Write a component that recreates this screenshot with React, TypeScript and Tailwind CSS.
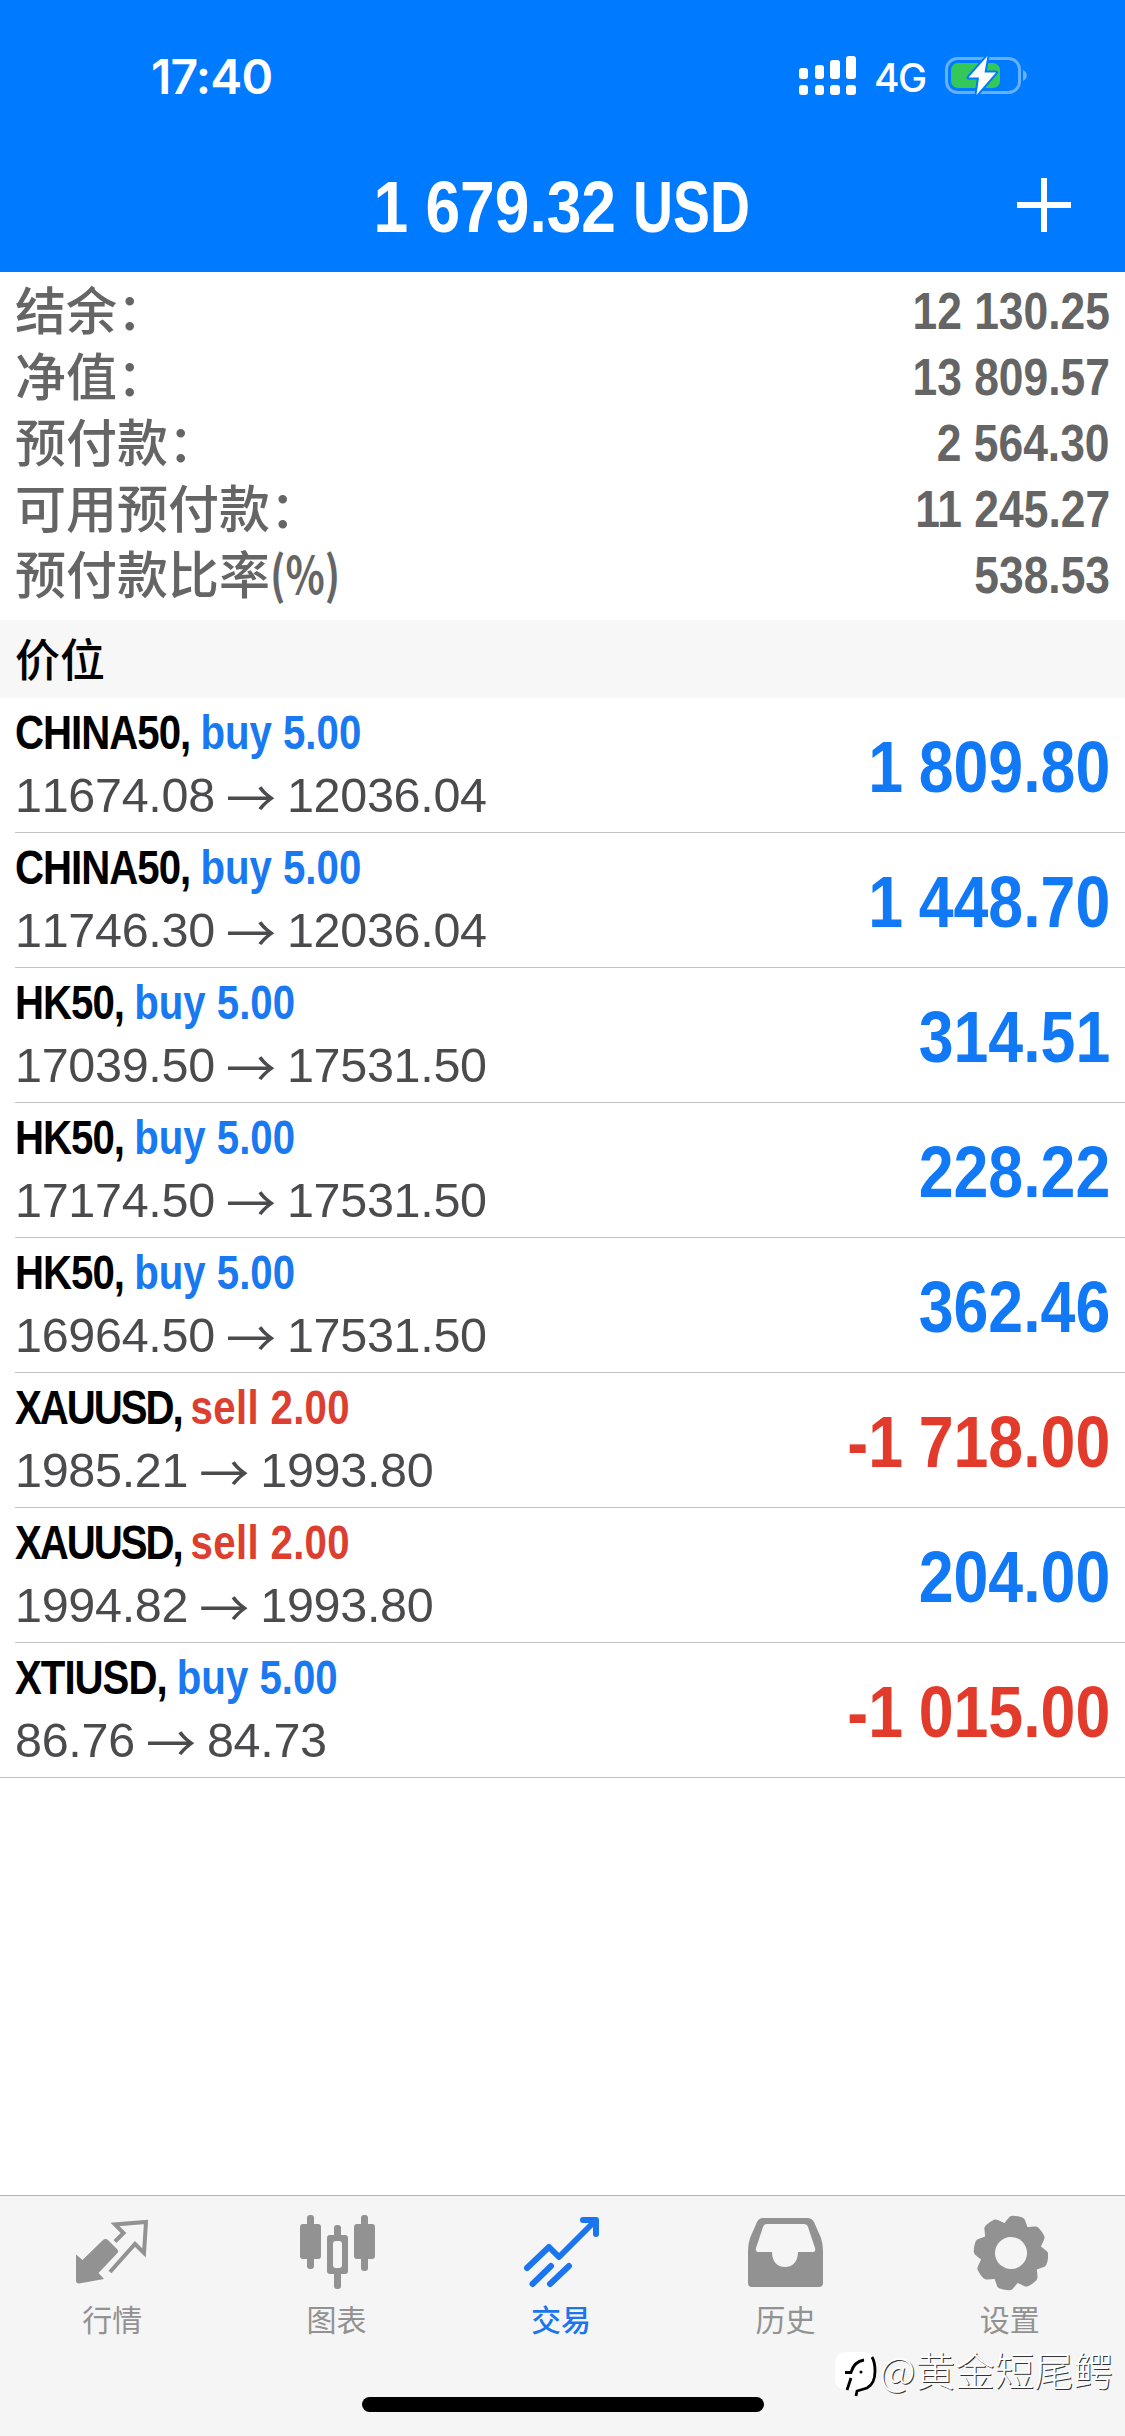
import React from 'react'

type Position = {
  symbol: string
  side: 'buy' | 'sell'
  volume: string
  open: string
  current: string
  profit: string
}

const summary = [
  { label: '结余：', value: '12 130.25' },
  { label: '净值：', value: '13 809.57' },
  { label: '预付款：', value: '2 564.30' },
  { label: '可用预付款：', value: '11 245.27' },
  { label: '预付款比率', unit: '(%)', value: '538.53' },
]

const positions: Position[] = [
  { symbol: 'CHINA50', side: 'buy', volume: '5.00', open: '11674.08', current: '12036.04', profit: '1 809.80' },
  { symbol: 'CHINA50', side: 'buy', volume: '5.00', open: '11746.30', current: '12036.04', profit: '1 448.70' },
  { symbol: 'HK50', side: 'buy', volume: '5.00', open: '17039.50', current: '17531.50', profit: '314.51' },
  { symbol: 'HK50', side: 'buy', volume: '5.00', open: '17174.50', current: '17531.50', profit: '228.22' },
  { symbol: 'HK50', side: 'buy', volume: '5.00', open: '16964.50', current: '17531.50', profit: '362.46' },
  { symbol: 'XAUUSD', side: 'sell', volume: '2.00', open: '1985.21', current: '1993.80', profit: '-1 718.00' },
  { symbol: 'XAUUSD', side: 'sell', volume: '2.00', open: '1994.82', current: '1993.80', profit: '204.00' },
  { symbol: 'XTIUSD', side: 'buy', volume: '5.00', open: '86.76', current: '84.73', profit: '-1 015.00' },
]

// condensed look: bold sans squeezed horizontally with scale-x
const condensed = "font-['Liberation_Sans',Arial,sans-serif] font-bold"
const cjk = "font-['Noto_Sans_CJK_SC',sans-serif]"

const StatusBar: React.FC = () => (
  <div className="flex h-[138px] items-start justify-between pl-[151px] pr-[96px] text-white">
    <span className="mt-[53px] font-['Inter',sans-serif] text-[48px] leading-[48px] font-semibold tracking-[-0.8px]">
      17:40
    </span>
    <div className="mt-[52px] flex">
      <svg className="mt-[3px]" width="58" height="42" viewBox="0 0 58 42" fill="#fff">
        <rect x="0" y="13" width="9" height="11" rx="3" />
        <rect x="16" y="10" width="9" height="14" rx="3" />
        <rect x="31" y="5" width="10" height="19" rx="3" />
        <rect x="47" y="1" width="10" height="23" rx="3" />
        <rect x="0" y="30" width="9" height="10" rx="3" />
        <rect x="16" y="30" width="9" height="10" rx="3" />
        <rect x="31" y="30" width="10" height="10" rx="3" />
        <rect x="47" y="30" width="10" height="10" rx="3" />
      </svg>
      <span className="mt-[4px] ml-[17px] w-[54px] font-['Inter',sans-serif] text-[39px] leading-[44px] font-medium tracking-[-1.5px]">
        4G
      </span>
      <svg className="ml-[17px]" width="84" height="44" viewBox="0 0 84 44">
        <rect x="1.5" y="6.5" width="73" height="34" rx="11" fill="none" stroke="#66b0ff" strokeWidth="3" />
        <path d="M78 18c5 2 5 9 0 11z" fill="#66b0ff" />
        <rect x="6" y="11" width="49" height="25" rx="7" fill="#34c759" />
        <path
          d="M42.500 4 23.500 25.500h10.500L31.500 43 51 20.500H39.500z"
          fill="#fff"
          stroke="#007aff"
          strokeWidth="4"
          strokeLinejoin="round"
          paintOrder="stroke"
        />
      </svg>
    </div>
  </div>
)

const QuotesIcon = () => (
  <svg width="76" height="76" viewBox="0 0 76 76">
    <path
      d="M2 39.500 8.500 45 28.500 25.500c2-2 4-2 5.500-.5l9 9c1.500 1.500 1.500 3 0 4.500L24.500 58l5.500 6L5 68.500q-3 0-3-3z"
      fill="#929292"
    />
    <path
      d="M41 26.500 49.500 18 41 9.500l31-2.500-2 31-9-9L36 57"
      fill="none"
      stroke="#929292"
      strokeWidth="4"
    />
  </svg>
)

const ChartIcon = () => (
  <svg width="76" height="76" viewBox="0 0 76 76" fill="#929292">
    <rect x="8" y="0" width="7" height="54" rx="3" />
    <rect x="1" y="9" width="21" height="35" rx="3" />
    <rect x="35" y="10" width="7" height="64" rx="3" />
    <rect x="28" y="20" width="21" height="39" rx="3" />
    <rect x="34" y="26" width="9" height="27" rx="3" fill="#f5f5f5" />
    <rect x="62" y="0" width="7" height="56" rx="3" />
    <rect x="55" y="9" width="21" height="35" rx="3" />
  </svg>
)

const TradeIcon = () => (
  <svg width="76" height="76" viewBox="0 0 76 76" fill="none" stroke="#1a75ee" strokeWidth="6" strokeLinecap="round" strokeLinejoin="round">
    <path d="M4 53 26 32l10 10L72 6" />
    <path d="M60 5h13v14" />
    <path d="M9.500 69 28 51M27 69l19-18" />
  </svg>
)

const HistoryIcon = () => (
  <svg width="76" height="76" viewBox="0 0 76 76">
    <path
      fillRule="evenodd"
      d="M16 3h44q5 0 7 4l7 16q2 6 2 13v32q0 4-4 4H5q-4 0-4-4V36q0-7 2-13L10 7q2-4 6-4zM20 9q-3 0-4 3L9 33q-1 4 3 4h13c0 9 5 15 13 15s13-6 13-15h15q3 0 2-4l-7-21q-1-3-4-3z"
      fill="#929292"
    />
  </svg>
)

const SettingsIcon = () => (
  <svg width="76" height="76" viewBox="-39 -38 76 76">
    <g fill="#929292" transform="rotate(10)">
      <circle r="30" />
      {[0, 45, 90, 135, 180, 225, 270, 315].map((angle) => (
        <path
          key={angle}
          transform={`rotate(${angle})`}
          d="M-12.500-27-8.500-34q1-2.500 3.500-3 5-.8 10 0 2.500.5 3.500 3L12.500-27z"
        />
      ))}
    </g>
    <circle r="16" fill="#f5f5f5" />
  </svg>
)

const tabs = [
  { label: '行情', icon: <QuotesIcon /> },
  { label: '图表', icon: <ChartIcon /> },
  { label: '交易', icon: <TradeIcon />, active: true },
  { label: '历史', icon: <HistoryIcon /> },
  { label: '设置', icon: <SettingsIcon /> },
]

const PositionRow: React.FC<{ position: Position; last: boolean }> = ({ position, last }) => (
  <div className={last ? '' : 'pl-[15px]'}>
    <div
      className={`flex h-[135px] justify-between border-b border-[#c2c3c5] pr-[15px] ${last ? 'pl-[15px]' : ''}`}
    >
      <div className="flex flex-col pt-[3px]">
        <div className={`${condensed} flex origin-left scale-x-[0.82] text-[49px] leading-[63px] whitespace-pre`}>
          <span className={`text-black ${position.side === 'buy' ? 'tracking-[-1.2px]' : 'tracking-[-2.5px]'}`}>
            {position.symbol},{' '}
          </span>
          <span className={position.side === 'buy' ? 'text-[#1a78f0]' : 'tracking-[0.4px] text-[#dc3f30]'}>
            {position.side} {position.volume}
          </span>
        </div>
        <div className="flex font-['Liberation_Sans',Arial,sans-serif] text-[48.5px] leading-[62px] tracking-[-0.3px] text-[#4b4b4d] [font-kerning:none]">
          <span>{position.open}</span>
          <span className={`${cjk} mx-[11px] text-[50px] tracking-normal`}>→</span>
          <span>{position.current}</span>
        </div>
      </div>
      <span
        className={`${condensed} mt-[33px] origin-right scale-x-[0.87] text-[72px] leading-[72px] [word-spacing:-2px] ${position.profit.startsWith('-') ? 'text-[#e23b2b]' : 'text-[#1279f6]'}`}
      >
        {position.profit}
      </span>
    </div>
  </div>
)

const App: React.FC = () => (
  <div className="flex h-[2436px] w-[1125px] flex-col overflow-hidden bg-white">
    <header className="h-[272px] bg-[#007aff]">
      <StatusBar />
      <div className="grid h-[134px] grid-cols-[1fr_auto_1fr] items-center text-white">
        <span />
        <h1 className={`${condensed} mt-[4px] ml-[14px] scale-x-[0.865] text-[72px] leading-[72px]`}>
          1 679.32 <span className="inline-block origin-left scale-x-[0.89]">USD</span>
        </h1>
        <svg className="mr-[53px] justify-self-end" width="56" height="56" viewBox="0 0 56 56" stroke="#fff" strokeWidth="6">
          <path d="M28 1v54M1 28h54" />
        </svg>
      </div>
    </header>

    <section className="h-[348px] pt-[3px]">
      {summary.map(({ label, unit, value }) => (
        <div key={label} className="flex h-[66px] justify-between pr-[15px] pl-[15px] text-[#656565]">
          <div className={`${cjk} flex text-[51px] leading-[66px] font-medium`}>
            <span>{label}</span>
            {unit && <span className="origin-left scale-x-[0.8] font-bold">{unit}</span>}
          </div>
          <span className={`${condensed} mt-[4px] origin-right scale-x-[0.87] text-[51px] leading-[66px]`}>{value}</span>
        </div>
      ))}
    </section>

    <div className={`${cjk} flex h-[78px] items-center bg-[#f7f7f7] px-[15px] pb-[3px] text-[45px] font-medium text-black`}>
      价位
    </div>

    <main className="flex-1">
      {positions.map((position, i) => (
        <PositionRow key={i} position={position} last={i === positions.length - 1} />
      ))}
    </main>

    <footer className="relative h-[241px] border-t border-[#b2b5b5] bg-[#f5f5f5]">
      <nav className="mr-[3px] grid grid-cols-5">
        {tabs.map(({ label, icon, active }) => (
          <div key={label} className="flex flex-col items-center pt-[19px]">
            {icon}
            <span
              className={`${cjk} mt-[6px] text-[30px] leading-[42px] ${active ? 'font-medium text-[#1a75ee]' : 'text-[#929292]'}`}
            >
              {label}
            </span>
          </div>
        ))}
      </nav>
      <div className="absolute bottom-[24px] left-[362px] h-[15px] w-[402px] rounded-full bg-black" />
      <div className="absolute right-[12px] bottom-[37px] flex items-start">
        <svg className="mr-[3px]" width="42" height="48" viewBox="0 0 42 48">
          <path d="M12 1h15q13 0 13 14v11q0 12-12 13l-7 6-2-6H10Q0 38 0 27V14Q0 1 12 1z" fill="#fff" />
          <path
            d="M37 6q3 5 3 14 0 13-8 17l-10 3-1 5M12 39l4-12M10 21.500h6q3-11 13-12.500"
            fill="none"
            stroke="#000"
            strokeWidth="2.800"
          />
          <circle cx="26" cy="21" r="1.500" />
        </svg>
        <span className={`${cjk} -mt-[7px] text-[39.5px] leading-[50px] font-light text-white [text-shadow:1px_1px_0_#333]`}>
          @黄金短尾鳄
        </span>
      </div>
    </footer>
  </div>
)

export default App
